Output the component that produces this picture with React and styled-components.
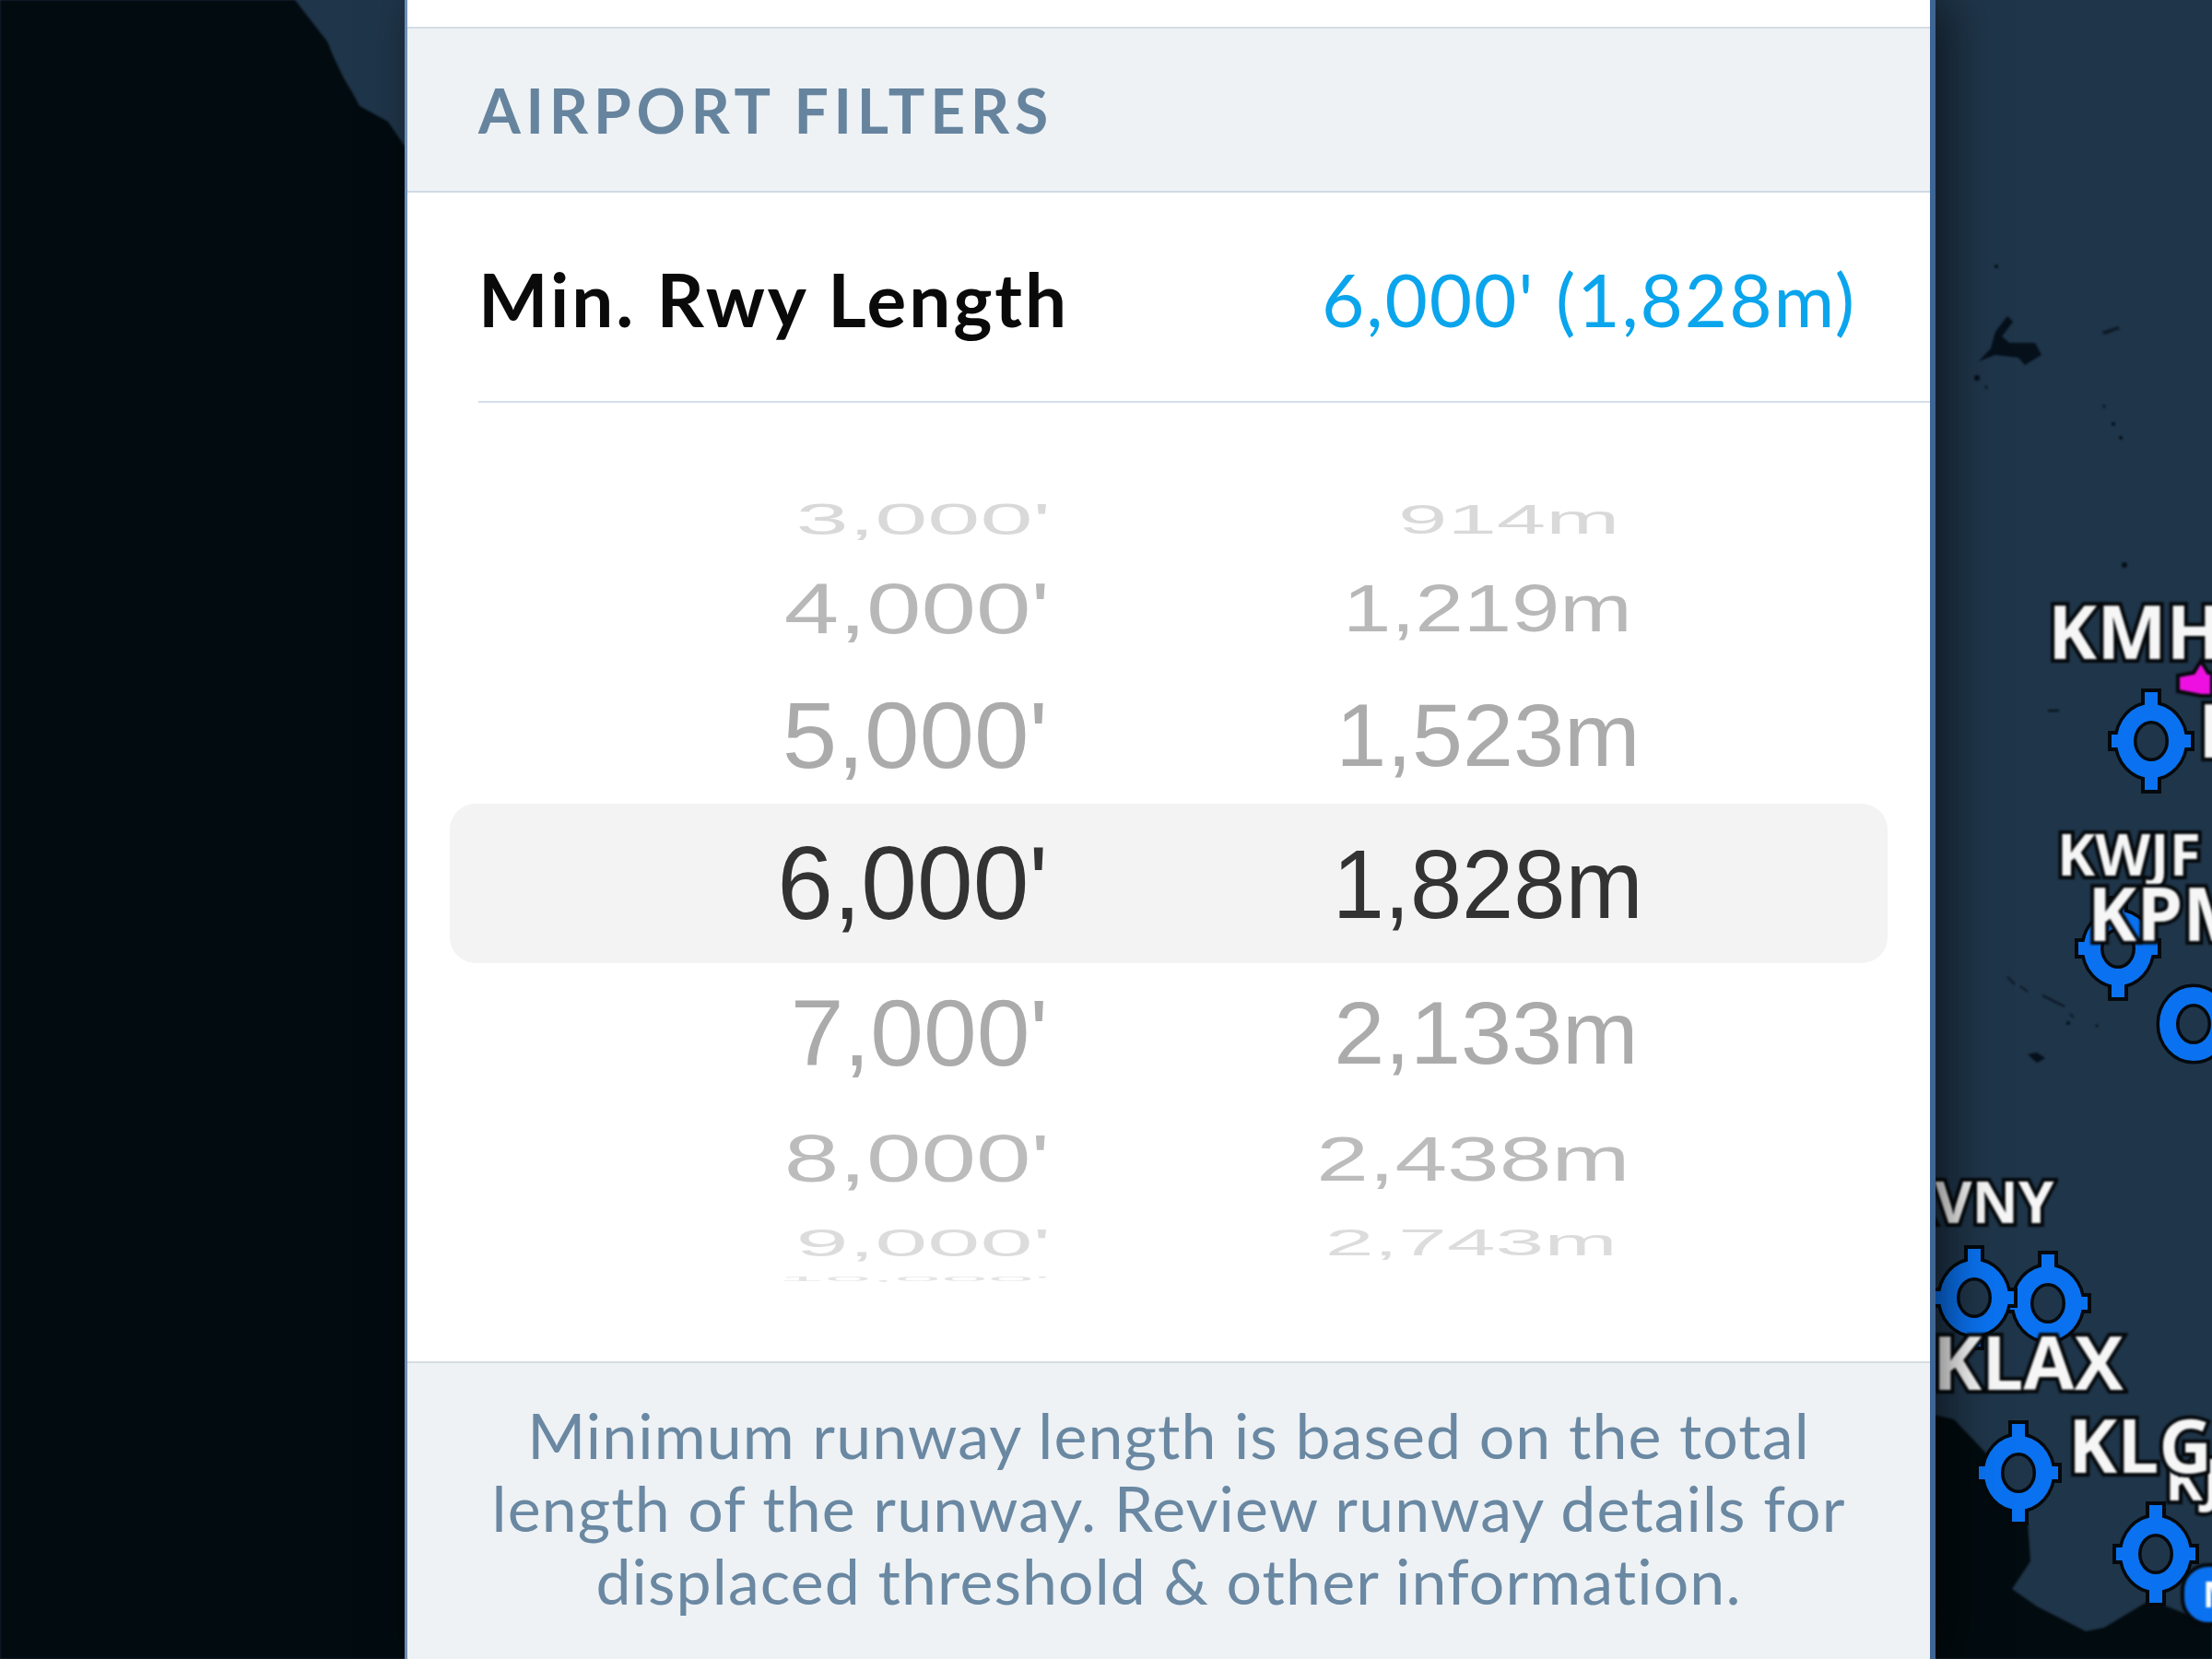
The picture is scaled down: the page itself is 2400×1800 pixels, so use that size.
import React from 'react'
import styled, { createGlobalStyle } from 'styled-components'

const GlobalStyle = createGlobalStyle`
    html, body {
        margin: 0;
        padding: 0;
        background: #1f3549;
    }
`

const Page = styled.div`
    position: relative;
    width: 2400px;
    height: 1800px;
    overflow: hidden;
    display: flex;
    padding-left: 439px;
    box-sizing: border-box;
`

const MapLayer = styled.div`
    position: absolute;
    inset: 0;
    background: #1f3549;
`

const MapShapes = styled.svg`
    position: absolute;
    left: 0;
    top: 0;
    filter: blur(0.8px);
`

const MapLabel = styled.div`
    position: absolute;
    left: ${(p) => p.$x}px;
    top: ${(p) => p.$y}px;
    font-family: 'Open Sans', sans-serif;
    font-weight: 700;
    font-size: ${(p) => p.$size}px;
    line-height: 1;
    color: #f6f6f6;
    white-space: nowrap;
    -webkit-text-stroke: 8px #05090c;
    paint-order: stroke fill;
    filter: blur(0.9px);
`

const MarkerSvg = styled.svg`
    position: absolute;
    left: ${(p) => p.$x - 49}px;
    top: ${(p) => p.$y - 59}px;
    filter: blur(0.7px);
`

const Badge = styled.div`
    position: absolute;
    left: 2366px;
    top: 1696px;
    width: 90px;
    height: 60px;
    border-radius: 30px;
    background: #0a72f0;
    border: 4px solid #05090c;
    font-family: 'Open Sans', sans-serif;
    font-weight: 700;
    font-size: 40px;
    line-height: 58px;
    padding-left: 20px;
    color: #fff;
    filter: blur(0.8px);
`

const Panel = styled.div`
    position: relative;
    width: 1661px;
    height: 1800px;
    box-sizing: border-box;
    background: #fff;
    border-left: 3px solid #6f8fb4;
    border-right: 6px solid #3f6595;
    box-shadow: 14px 0 48px rgba(0, 0, 0, 0.55);
    display: flex;
    flex-direction: column;
    flex: none;
`

const TopGap = styled.div`
    height: 29px;
    flex: none;
`

const SectionHeader = styled.div`
    height: 180px;
    flex: none;
    box-sizing: border-box;
    background: #eef2f5;
    border-top: 2px solid #d5dde4;
    border-bottom: 2px solid #cfdbe6;
    display: flex;
    align-items: center;
    padding-left: 77px;
    font-family: 'Lato', sans-serif;
    font-weight: 700;
    font-size: 66px;
    letter-spacing: 5.7px;
    color: #66849e;
    filter: blur(0.6px);
`

const SettingRow = styled.div`
    height: 228px;
    flex: none;
    margin-left: 77px;
    padding: 4px 80px 0 0;
    box-sizing: border-box;
    border-bottom: 2px solid #d3dfea;
    display: flex;
    align-items: center;
    justify-content: space-between;
    font-size: 80px;
    font-family: 'Lato', sans-serif;
    filter: blur(0.5px);
`

const SettingLabel = styled.span`
    font-weight: 700;
    letter-spacing: 2.9px;
    color: #0a0a0a;
`

const SettingValue = styled.span`
    font-weight: 400;
    letter-spacing: 1.9px;
    color: #0aa5ec;
`

const Picker = styled.div`
    flex: 1;
    padding: 91px 46px 0;
    display: flex;
    flex-direction: column;
`

const PickerRow = styled.div`
    height: ${(p) => p.$height}px;
    flex: none;
    display: grid;
    grid-template-columns: 649px 646px;
    grid-template-rows: 100%;
    align-items: center;
    background: ${(p) => (p.$selected ? '#f3f3f3' : 'transparent')};
    border-radius: ${(p) => (p.$selected ? '28px' : '0')};
    color: ${(p) => p.$color};
    font-family: 'Liberation Sans', Arial, sans-serif;
    line-height: 1;
`

const FeetCell = styled.div`
    justify-self: end;
    margin-right: ${(p) => p.$inset}px;
    font-size: 107px;
    white-space: nowrap;
    transform: scale(${(p) => p.$stretch}, ${(p) => p.$squash});
    transform-origin: right center;
    filter: blur(0.7px);
`

const MetricCell = styled.div`
    justify-self: end;
    margin-right: ${(p) => p.$inset}px;
    font-size: 100px;
    white-space: nowrap;
    transform: scale(${(p) => p.$stretch}, ${(p) => p.$squash});
    transform-origin: right center;
    filter: blur(0.7px);
`

const Footer = styled.div`
    height: 323px;
    flex: none;
    background: #eef2f5;
    border-top: 2px solid #d5dde4;
    padding-top: 38px;
    box-sizing: border-box;
    text-align: center;
    font-family: 'Lato', sans-serif;
    font-size: 68px;
    letter-spacing: 1.1px;
    line-height: 79px;
    color: #6a88a2;
    filter: blur(0.6px);
`

const FooterLine = styled.div`
    white-space: nowrap;
`

const pickerRows = [
    { ft: "3,000'", m: '914m', height: 70, squash: 0.45, ftStretch: 0.96, ftInset: -3, stretch: 0.96, inset: 26, color: '#d9d9d9' },
    { ft: "4,000'", m: '1,219m', height: 124, squash: 0.72, ftStretch: 1, ftInset: -2, stretch: 0.94, inset: 12, color: '#b8b8b8' },
    { ft: "5,000'", m: '1,523m', height: 150, squash: 0.96, ftStretch: 1, ftInset: 0, stretch: 0.99, inset: 3, color: '#ababab' },
    { ft: "6,000'", m: '1,828m', height: 173, squash: 1.06, ftStretch: 1.02, ftInset: 0, stretch: 1.01, inset: 0, color: '#333', selected: true },
    { ft: "7,000'", m: '2,133m', height: 150, squash: 0.96, ftStretch: 0.97, ftInset: 0, stretch: 0.99, inset: 5, color: '#ababab' },
    { ft: "8,000'", m: '2,438m', height: 124, squash: 0.68, ftStretch: 1, ftInset: -2, stretch: 1.02, inset: 14, color: '#bcbcbc' },
    { ft: "9,000'", m: '2,743m', height: 58, squash: 0.4, ftStretch: 0.96, ftInset: -3, stretch: 0.95, inset: 28, color: '#dcdcdc' },
    { ft: "10,000'", m: '', height: 20, squash: 0.06, ftStretch: 0.85, ftInset: -3, stretch: 1, inset: 0, color: '#e4e4e4' }
]

const Marker = ({ x, y, arms = true }) => (
    <MarkerSvg $x={x} $y={y} width="98" height="118" viewBox="0 0 98 118" fill="none">
        <g stroke="#05090c">
            <ellipse cx="49" cy="59" rx="28" ry="31" strokeWidth="25" />
            {arms && <path d="M49 2V24M49 94V116M2 59H18M80 59H96" strokeWidth="22" />}
        </g>
        <g stroke="#0a72f0">
            <ellipse cx="49" cy="59" rx="28" ry="31" strokeWidth="18" />
            {arms && <path d="M49 6V26M49 92V112M6 59H20M78 59H92" strokeWidth="14" />}
        </g>
    </MarkerSvg>
)

const MapBackground = () => (
    <MapShapes width="2400" height="1800" viewBox="0 0 2400 1800">
        <path
            d="M0 0H320L355 45L362 62L373 85L382 100L390 115L421 132L440 160V1800H0Z"
            fill="#020b0f"
        />
        <path
            d="M2090 1533L2120 1540L2157 1579L2200 1652L2203 1694L2183 1724L2210 1743L2263 1770L2283 1766L2333 1736L2400 1762V1800H2090Z"
            fill="#020b0f"
        />
        <g fill="#05101a">
            <path d="M2178 343L2184 349L2172 365L2180 372L2208 372L2215 385L2197 396L2190 388L2165 385L2147 392L2160 378L2165 360Z" />
            <circle cx="2166" cy="289" r="2" />
            <circle cx="2145" cy="410" r="3" />
            <circle cx="2155" cy="420" r="1.5" />
            <path d="M2280 360L2298 354L2300 357L2284 363Z" opacity="0.7" />
            <circle cx="2283" cy="441" r="1.5" />
            <circle cx="2293" cy="460" r="2" />
            <circle cx="2301" cy="475" r="2" />
            <circle cx="2305" cy="613" r="3" />
            <path d="M2222 770H2234V772H2222Z" />
            <path d="M2200 1144L2210 1142L2219 1148L2210 1153Z" />
            <path d="M2178 1060L2186 1068M2192 1070L2200 1076M2216 1080L2240 1092M2246 1100L2250 1104" stroke="#05101a" strokeWidth="1.5" />
            <circle cx="2244" cy="1110" r="2" />
            <circle cx="2275" cy="1113" r="1.5" />
        </g>
        <path
            d="M2363 733L2380 730L2388 717L2396 730L2400 730V755H2388L2363 750Z"
            fill="#ee10e0"
            stroke="#05090c"
            strokeWidth="4"
        />
    </MapShapes>
)

export default function App() {
    return (
        <>
            <GlobalStyle />
            <Page>
                <MapLayer>
                    <MapBackground />
                    <MapLabel $x={2222} $y={644} $size={80}>KMH</MapLabel>
                    <Marker x={2334} y={804} />
                    <MapLabel $x={2385} $y={751} $size={80}>KMH</MapLabel>
                    <MapLabel $x={2232} $y={895} $size={62}>KWJF</MapLabel>
                    <Marker x={2298} y={1029} />
                    <MapLabel $x={2265} $y={950} $size={80}>KPM</MapLabel>
                    <Marker x={2380} y={1111} arms={false} />
                    <MapLabel $x={2058} $y={1272} $size={62}>KVNY</MapLabel>
                    <Marker x={2222} y={1414} />
                    <Marker x={2142} y={1408} />
                    <MapLabel $x={2097} $y={1437} $size={80}>KLAX</MapLabel>
                    <MapLabel $x={2349} $y={1573} $size={62}>KJ</MapLabel>
                    <MapLabel $x={2244} $y={1527} $size={80}>KLG</MapLabel>
                    <Marker x={2190} y={1598} />
                    <Badge>M</Badge>
                    <Marker x={2339} y={1686} />
                </MapLayer>
                <Panel>
                    <TopGap />
                    <SectionHeader>AIRPORT FILTERS</SectionHeader>
                    <SettingRow>
                        <SettingLabel>Min. Rwy Length</SettingLabel>
                        <SettingValue>6,000' (1,828m)</SettingValue>
                    </SettingRow>
                    <Picker>
                        {pickerRows.map((row) => (
                            <PickerRow key={row.ft} $height={row.height} $selected={row.selected} $color={row.color}>
                                <FeetCell $squash={row.squash} $stretch={row.ftStretch} $inset={row.ftInset}>
                                    {row.ft}
                                </FeetCell>
                                <MetricCell $squash={row.squash} $stretch={row.stretch} $inset={row.inset}>
                                    {row.m}
                                </MetricCell>
                            </PickerRow>
                        ))}
                    </Picker>
                    <Footer>
                        <FooterLine>Minimum runway length is based on the total</FooterLine>
                        <FooterLine>length of the runway. Review runway details for</FooterLine>
                        <FooterLine>displaced threshold &amp; other information.</FooterLine>
                    </Footer>
                </Panel>
            </Page>
        </>
    )
}
